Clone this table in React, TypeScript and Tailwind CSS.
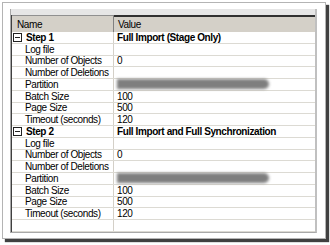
import React from "react";

type Row = { label: string; value?: string; step?: boolean; smudge?: boolean };

const rows: Row[] = [
  { label: "Step 1", value: "Full Import (Stage Only)", step: true },
  { label: "Log file" },
  { label: "Number of Objects", value: "0" },
  { label: "Number of Deletions" },
  { label: "Partition", smudge: true },
  { label: "Batch Size", value: "100" },
  { label: "Page Size", value: "500" },
  { label: "Timeout (seconds)", value: "120" },
  { label: "Step 2", value: "Full Import and Full Synchronization", step: true },
  { label: "Log file" },
  { label: "Number of Objects", value: "0" },
  { label: "Number of Deletions" },
  { label: "Partition", smudge: true },
  { label: "Batch Size", value: "100" },
  { label: "Page Size", value: "500" },
  { label: "Timeout (seconds)", value: "120" },
];

function Expander() {
  return (
    <div className="relative ml-[1px] mr-[4px] h-[9px] w-[9px] shrink-0 border border-[#222]">
      <div className="absolute left-[1px] right-[1px] top-[3px] h-[1px] bg-[#222]" />
    </div>
  );
}

function GridRow({ r }: { r: Row }) {
  return (
    <div className="flex h-[11.75px] shrink-0 border-b border-[#dcdad3] leading-[11px]">
      <div className="flex w-[102px] shrink-0 items-center border-r border-[#d4d0c8]">
        {r.step ? (
          <>
            <Expander />
            <span className="font-bold">{r.label}</span>
          </>
        ) : (
          <span className="pl-[13px]">{r.label}</span>
        )}
      </div>
      <div className="relative flex flex-1 items-center pl-[3px]">
        {r.smudge ? (
          <div className="h-[10px] w-[152px] rounded-l-[3px] rounded-r-full bg-[#7e7e7e] blur-[1.4px]" />
        ) : (
          <span className={r.step ? "font-bold" : ""}>{r.value ?? ""}</span>
        )}
      </div>
    </div>
  );
}

export default function App() {
  return (
    <div className="h-[245px] w-[330px] overflow-hidden bg-white font-['Liberation_Sans',Arial,sans-serif] text-[10px] tracking-[-0.4px] text-black">
      <div className="ml-[2px] mt-[2px] h-[237px] w-[324px] border border-[#b4b4b4] bg-white pl-[7px] pt-[6px] shadow-[3px_3px_1px_rgba(30,30,30,0.85)]">
        <div className="flex h-[224px] w-[307px] flex-col border-b border-l border-r-2 border-[#a8a8a8] border-r-[#c0c0c0] bg-white">
          <div className="h-[6px] shrink-0 bg-[#e6e6e6]" />
          <div className="flex flex-1 flex-col border-l border-[#404040]">
            <div className="flex h-[17px] shrink-0 bg-[#d4d0c8] leading-[15px]">
              <div className="w-[102px] shrink-0 border-r border-t border-[#909090] border-r-[#808080] pl-[5px] pt-[1px]">Name</div>
              <div className="flex-1 border-t-2 border-[#303030] pl-[4px]">Value</div>
            </div>
            {rows.map((r, i) => (
              <GridRow key={i} r={r} />
            ))}
            <div className="flex flex-1 border-b border-[#dcdad3]">
              <div className="w-[102px] shrink-0 border-r border-[#d4d0c8]" />
              <div className="flex-1" />
            </div>
          </div>
        </div>
      </div>
    </div>
  );
}
